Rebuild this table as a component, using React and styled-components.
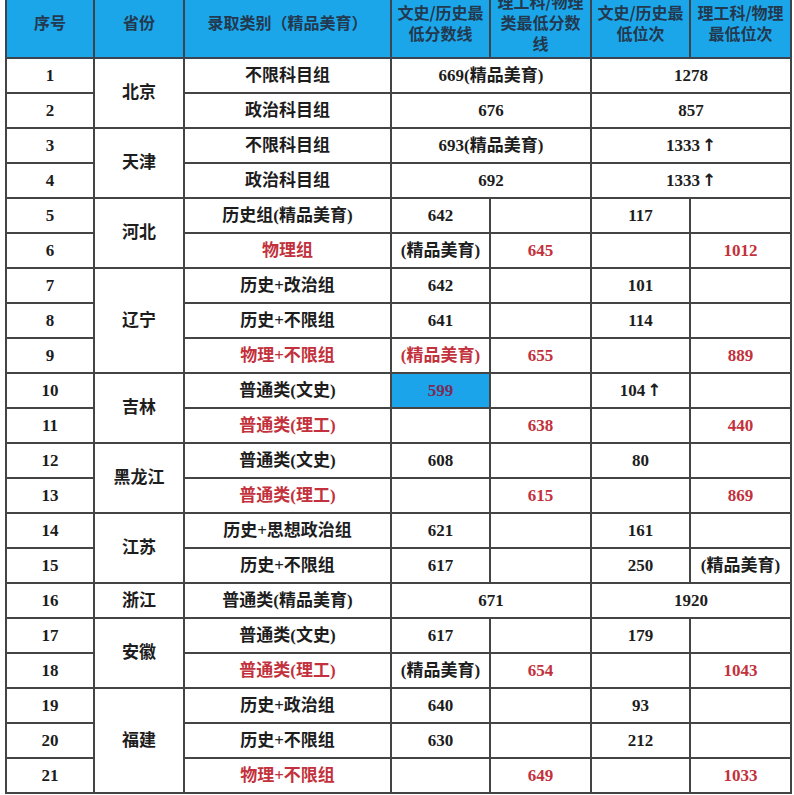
import React from "react";
import styled, { createGlobalStyle } from "styled-components";

const Global = createGlobalStyle`
  html, body { margin: 0; padding: 0; background: #ffffff; }
  body { overflow: hidden; }
`;

const Page = styled.div`
  width: 794px;
  height: 795px;
  overflow: hidden;
  background: #ffffff;
  padding-left: 5px;
  box-sizing: border-box;
`;

const Table = styled.table`
  width: 785px;
  margin-top: -12px;
  border-collapse: collapse;
  table-layout: fixed;
`;

const Col = styled.col`
  width: ${(p) => p.$w}px;
`;

const HeadRow = styled.tr`
  height: 70px;
`;

const HeadCell = styled.th`
  background: #1ca6ea;
  color: #22394f;
  font-family: "Noto Sans CJK SC", sans-serif;
  font-size: 16px;
  font-weight: 700;
  line-height: 21px;
  padding: 0 1px;
  text-align: center;
  vertical-align: middle;
  border: 2px solid #3a4550;
  border-top: none;
`;

const Row = styled.tr`
  height: 35px;
`;

const Cell = styled.td`
  font-family: "Liberation Serif", "Noto Sans CJK SC", serif;
  font-size: 17px;
  font-weight: 700;
  line-height: 20px;
  padding: 0 1px;
  text-align: center;
  vertical-align: middle;
  white-space: nowrap;
  color: ${(p) => (p.$hl ? "#7a2c57" : p.$red ? "#c2313c" : "#1d1d1d")};
  background: ${(p) => (p.$hl ? "#1ba4e9" : "#ffffff")};
  border: 2px solid #444444;
`;

const Arrow = styled.span`
  font-family: "DejaVu Sans", sans-serif;
  font-weight: 700;
  font-size: 17px;
  margin-left: 2px;
`;

const up = (t) => (
  <>
    {t}
    <Arrow>↑</Arrow>
  </>
);

const M = "(精品美育)";

const rows = [
  { n: 1, prov: ["北京", 2], cat: "不限科目组", cells: [{ t: "669" + M, s: 2 }, { t: "1278", s: 2 }] },
  { n: 2, cat: "政治科目组", cells: [{ t: "676", s: 2 }, { t: "857", s: 2 }] },
  { n: 3, prov: ["天津", 2], cat: "不限科目组", cells: [{ t: "693" + M, s: 2 }, { t: up("1333"), s: 2 }] },
  { n: 4, cat: "政治科目组", cells: [{ t: "692", s: 2 }, { t: up("1333"), s: 2 }] },
  { n: 5, prov: ["河北", 2], cat: "历史组" + M, cells: [{ t: "642" }, { t: "" }, { t: "117" }, { t: "" }] },
  { n: 6, cat: "物理组", red: true, cells: [{ t: M }, { t: "645", r: true }, { t: "" }, { t: "1012", r: true }] },
  { n: 7, prov: ["辽宁", 3], cat: "历史+改治组", cells: [{ t: "642" }, { t: "" }, { t: "101" }, { t: "" }] },
  { n: 8, cat: "历史+不限组", cells: [{ t: "641" }, { t: "" }, { t: "114" }, { t: "" }] },
  { n: 9, cat: "物理+不限组", red: true, cells: [{ t: M, r: true }, { t: "655", r: true }, { t: "" }, { t: "889", r: true }] },
  { n: 10, prov: ["吉林", 2], cat: "普通类(文史)", cells: [{ t: "599", hl: true }, { t: "" }, { t: up("104") }, { t: "" }] },
  { n: 11, cat: "普通类(理工)", red: true, cells: [{ t: "" }, { t: "638", r: true }, { t: "" }, { t: "440", r: true }] },
  { n: 12, prov: ["黑龙江", 2], cat: "普通类(文史)", cells: [{ t: "608" }, { t: "" }, { t: "80" }, { t: "" }] },
  { n: 13, cat: "普通类(理工)", red: true, cells: [{ t: "" }, { t: "615", r: true }, { t: "" }, { t: "869", r: true }] },
  { n: 14, prov: ["江苏", 2], cat: "历史+思想政治组", cells: [{ t: "621" }, { t: "" }, { t: "161" }, { t: "" }] },
  { n: 15, cat: "历史+不限组", cells: [{ t: "617" }, { t: "" }, { t: "250" }, { t: M }] },
  { n: 16, prov: ["浙江", 1], cat: "普通类" + M, cells: [{ t: "671", s: 2 }, { t: "1920", s: 2 }] },
  { n: 17, prov: ["安徽", 2], cat: "普通类(文史)", cells: [{ t: "617" }, { t: "" }, { t: "179" }, { t: "" }] },
  { n: 18, cat: "普通类(理工)", red: true, cells: [{ t: M }, { t: "654", r: true }, { t: "" }, { t: "1043", r: true }] },
  { n: 19, prov: ["福建", 3], cat: "历史+政治组", cells: [{ t: "640" }, { t: "" }, { t: "93" }, { t: "" }] },
  { n: 20, cat: "历史+不限组", cells: [{ t: "630" }, { t: "" }, { t: "212" }, { t: "" }] },
  { n: 21, cat: "物理+不限组", red: true, cells: [{ t: "" }, { t: "649", r: true }, { t: "" }, { t: "1033", r: true }] },
];

const widths = [88, 90, 207, 99, 101, 99, 101];
const heads = [
  ["序号"],
  ["省份"],
  ["录取类别（精品美育）"],
  ["文史/历史最", "低分数线"],
  ["理工科/物理", "类最低分数", "线"],
  ["文史/历史最", "低位次"],
  ["理工科/物理", "最低位次"],
];

export default function App() {
  return (
    <Page>
      <Global />
      <Table>
        <colgroup>
          {widths.map((w, i) => (
            <Col key={i} $w={w} />
          ))}
        </colgroup>
        <thead>
          <HeadRow>
            {heads.map((h, i) => (
              <HeadCell key={i}>
                {h.map((line, j) => (
                  <React.Fragment key={j}>
                    {j > 0 && <br />}
                    {line}
                  </React.Fragment>
                ))}
              </HeadCell>
            ))}
          </HeadRow>
        </thead>
        <tbody>
          {rows.map((r) => (
            <Row key={r.n}>
              <Cell>{r.n}</Cell>
              {r.prov && <Cell rowSpan={r.prov[1]}>{r.prov[0]}</Cell>}
              <Cell $red={r.red}>{r.cat}</Cell>
              {r.cells.map((c, i) => (
                <Cell key={i} colSpan={c.s || 1} $red={c.r} $hl={c.hl}>
                  {c.t}
                </Cell>
              ))}
            </Row>
          ))}
        </tbody>
      </Table>
    </Page>
  );
}
